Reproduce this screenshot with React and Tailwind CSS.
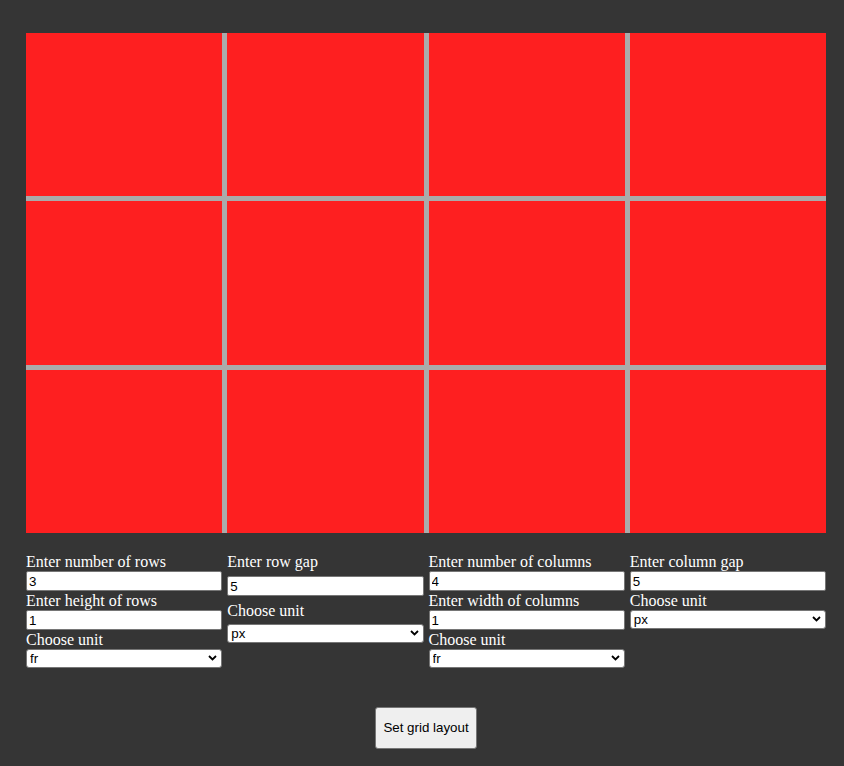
const cells = Array.from({ length: 12 });

const Label = ({ children, className = "" }) => (
  <label className={`block text-[16px] leading-[19px] text-white ${className}`} style={{ fontFamily: '"Liberation Serif", serif' }}>
    {children}
  </label>
);

const Field = ({ value, className = "" }) => (
  <input
    defaultValue={value}
    className={`block w-full h-[20px] bg-white border border-[#767676] rounded-[2px] px-[2px] text-[13.33px] text-black outline-none ${className}`}
    style={{ fontFamily: '"Liberation Sans", Arial, sans-serif' }}
  />
);

const Unit = ({ value, className = "" }) => (
  <div className={`relative ${className}`}>
    <select
      defaultValue={value}
      className="block w-full h-[19px] appearance-none bg-white border border-[#767676] rounded-[3px] pl-[3px] text-[13.33px] leading-[17px] text-black outline-none"
      style={{ fontFamily: '"Liberation Sans", Arial, sans-serif' }}
    >
      <option value="fr">fr</option>
      <option value="px">px</option>
      <option value="%">%</option>
    </select>
    <svg className="absolute right-[5px] top-[6px] pointer-events-none" width="9" height="6" viewBox="0 0 9 6">
      <path d="M1 1l3.5 3.5L8 1" fill="none" stroke="#000" strokeWidth="1.8" />
    </svg>
  </div>
);

export default function App() {
  return (
    <div className="min-h-screen bg-[#353535] pl-[26px] pt-[33px] pb-[17px]">
      <div className="w-[800px]">
        <div className="grid grid-cols-4 grid-rows-3 gap-[5px] h-[500px] bg-[#aaaaaa]">
          {cells.map((_, i) => (
            <div key={i} className="bg-[#fe1f20]" />
          ))}
        </div>

        <div className="grid grid-cols-4 gap-x-[5px] mt-[19px] items-start">
          <div>
            <Label>Enter number of rows</Label>
            <Field value="3" />
            <Label>Enter height of rows</Label>
            <Field value="1" />
            <Label>Choose unit</Label>
            <Unit value="fr" />
          </div>
          <div>
            <Label>Enter row gap</Label>
            <Field value="5" className="mt-[5px]" />
            <Label className="mt-[5px]">Choose unit</Label>
            <Unit value="px" className="mt-[4px]" />
          </div>
          <div>
            <Label>Enter number of columns</Label>
            <Field value="4" />
            <Label>Enter width of columns</Label>
            <Field value="1" />
            <Label>Choose unit</Label>
            <Unit value="fr" />
          </div>
          <div>
            <Label>Enter column gap</Label>
            <Field value="5" />
            <Label>Choose unit</Label>
            <Unit value="px" />
          </div>
        </div>

        <div className="flex justify-center mt-[39px]">
          <button
            className="h-[42px] px-[7px] bg-[#efefef] border border-[#767676] rounded-[3px] text-[13.33px] text-black"
            style={{ fontFamily: '"Liberation Sans", Arial, sans-serif' }}
          >
            Set grid layout
          </button>
        </div>
      </div>
    </div>
  );
}
